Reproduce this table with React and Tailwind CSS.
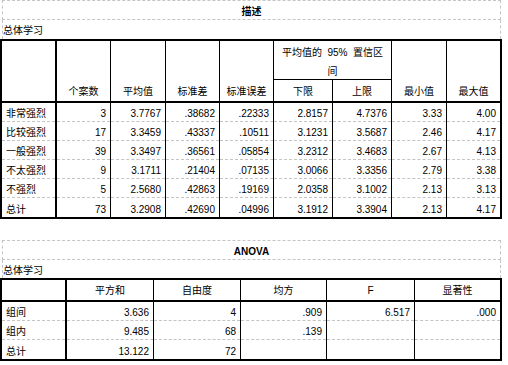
import React from 'react';

const descRows = [
    ['非常强烈', '3', '3.7767', '.38682', '.22333', '2.8157', '4.7376', '3.33', '4.00'],
    ['比较强烈', '17', '3.3459', '.43337', '.10511', '3.1231', '3.5687', '2.46', '4.17'],
    ['一般强烈', '39', '3.3497', '.36561', '.05854', '3.2312', '3.4683', '2.67', '4.13'],
    ['不太强烈', '9', '3.1711', '.21404', '.07135', '3.0066', '3.3356', '2.79', '3.38'],
    ['不强烈', '5', '2.5680', '.42863', '.19169', '2.0358', '3.1002', '2.13', '3.13'],
    ['总计', '73', '3.2908', '.42690', '.04996', '3.1912', '3.3904', '2.13', '4.17'],
];

const anovaRows = [
    ['组间', '3.636', '4', '.909', '6.517', '.000'],
    ['组内', '9.485', '68', '.139', '', ''],
    ['总计', '13.122', '72', '', '', ''],
];

const descCols = 'grid grid-cols-[55px_54px_55px_54px_54px_59px_59px_55px_53px]';
const anovaCols = 'grid grid-cols-[65px_87px_87px_86px_88px_85px]';

// one body cell: solid black column line on the right, dashed grey row line below
const Cell = ({ i, last, cols, children }) => {
    const first = i === 0;
    const end = i === cols - 1;
    return (
        <div className={`flex flex-col border-black ${first ? 'border-r-2' : end ? '' : 'border-r'}`}>
            <div
                className={`flex-1 flex items-end pb-[1px] leading-[12px] ${first ? 'justify-start pl-[4px]' : 'justify-end pr-[4px]'} ${last ? '' : 'border-b border-dashed border-[#c4c4c4]'}`}
            >
                {children}
            </div>
        </div>
    );
};

const Caption = ({ title, sub, subH }) => (
    <div className="ml-[2px] w-[499px]">
        <div className="h-[20px] border border-dashed border-[#c4c4c4] flex justify-center items-start pt-[5px] leading-[12px] font-bold">
            {title}
        </div>
        <div className={`${subH} border-x border-dashed border-[#c4c4c4] flex items-start pt-[5px] leading-[12px]`}>
            {sub}
        </div>
    </div>
);

const App = () => {
    const head = 'flex items-end justify-center pb-[3px] leading-[12px] border-black';

    return (
        <div className="w-[508px] h-[365px] bg-white text-black text-[10px] font-['Liberation_Sans','Noto_Sans_CJK_SC',sans-serif] overflow-hidden">
            {/* 描述 */}
            <Caption title="描述" sub="总体学习" subH="h-[19px]" />
            <div className="w-[502px] border-2 border-black">
                <div className={`${descCols} grid-rows-[39px_23px]`}>
                    <div className="row-span-2 border-r-2 border-b-2 border-black"></div>
                    <div className={`row-span-2 border-r border-b-2 ${head}`}>个案数</div>
                    <div className={`row-span-2 border-r border-b-2 ${head}`}>平均值</div>
                    <div className={`row-span-2 border-r border-b-2 ${head}`}>标准差</div>
                    <div className={`row-span-2 border-r border-b-2 ${head}`}>标准误差</div>
                    <div className="col-span-2 border-r border-b border-black text-center pt-[2px] leading-[19px]">
                        平均值的&nbsp; 95%&nbsp; 置信区<br />间
                    </div>
                    <div className={`row-span-2 border-r border-b-2 ${head}`}>最小值</div>
                    <div className={`row-span-2 border-b-2 ${head}`}>最大值</div>
                    <div className={`border-r border-b-2 ${head}`}>下限</div>
                    <div className={`border-r border-b-2 ${head}`}>上限</div>
                </div>
                {descRows.map((row, r) => (
                    <div key={r} className={`${descCols} h-[19px]`}>
                        {row.map((v, i) => (
                            <Cell key={i} i={i} cols={9} last={r === descRows.length - 1}>{v}</Cell>
                        ))}
                    </div>
                ))}
            </div>

            {/* ANOVA */}
            <div className="mt-[21px]">
                <Caption title="ANOVA" sub="总体学习" subH="h-[18px]" />
            </div>
            <div className="w-[502px] border-2 border-black">
                <div className={`${anovaCols} h-[22px]`}>
                    <div className="border-r-2 border-b-2 border-black"></div>
                    <div className={`border-r border-b-2 ${head} pb-[2px]`}>平方和</div>
                    <div className={`border-r border-b-2 ${head} pb-[2px]`}>自由度</div>
                    <div className={`border-r border-b-2 ${head} pb-[2px]`}>均方</div>
                    <div className={`border-r border-b-2 ${head} pb-[2px]`}>F</div>
                    <div className={`border-b-2 ${head} pb-[2px]`}>显著性</div>
                </div>
                {anovaRows.map((row, r) => (
                    <div key={r} className={`${anovaCols} h-[19px]`}>
                        {row.map((v, i) => (
                            <Cell key={i} i={i} cols={6} last={r === anovaRows.length - 1}>{v}</Cell>
                        ))}
                    </div>
                ))}
            </div>
        </div>
    );
};

export default App;
